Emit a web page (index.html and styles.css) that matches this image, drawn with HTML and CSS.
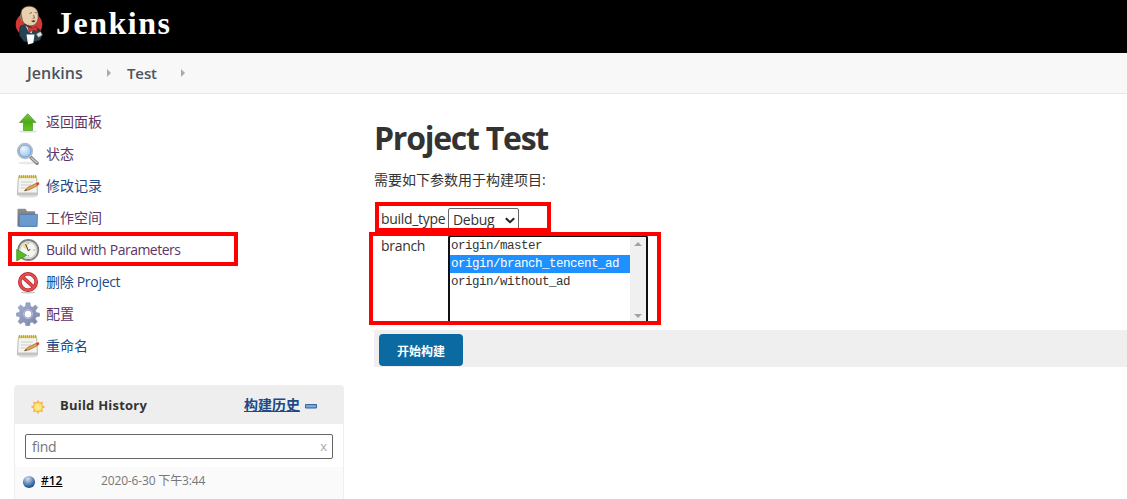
FILE: index.html
```html
<!DOCTYPE html>
<html lang="zh-CN">
<head>
<meta charset="utf-8">
<title>Test [Jenkins]</title>
<link rel="stylesheet" href="styles.css">
</head>
<body>
<svg class="defs" width="0" height="0" aria-hidden="true">
  <defs>
    <linearGradient id="green" x2="0" y2="1"><stop stop-color="#7cc63b"/><stop offset=".5" stop-color="#4fa81a"/><stop offset="1" stop-color="#62cc14"/></linearGradient>
    <linearGradient id="blue" x2="0" y2="1"><stop stop-color="#6f9dcd"/><stop offset="1" stop-color="#6699cf"/></linearGradient>
    <linearGradient id="gear" x2="1" y2="1"><stop stop-color="#a4b1d3"/><stop offset="1" stop-color="#7c81a6"/></linearGradient>
    <linearGradient id="gray" x2="0" y2="1"><stop stop-color="#8e8e8e"/><stop offset="1" stop-color="#6c6c6c"/></linearGradient>
    <radialGradient id="glass" cx=".4" cy=".35"><stop stop-color="#f0f7ff"/><stop offset="1" stop-color="#a6cbf2"/></radialGradient>
    <radialGradient id="ball" cx=".4" cy=".25" r=".75"><stop stop-color="#d5e0ec"/><stop offset=".5" stop-color="#6d94be"/><stop offset="1" stop-color="#14488c"/></radialGradient>
    <radialGradient id="sun"><stop stop-color="#fff4a5"/><stop offset="1" stop-color="#fcd95a"/></radialGradient>
    <symbol id="notepad" viewBox="0 0 24 24">
      <ellipse cx="12" cy="22.500" rx="9" ry="1" fill="#ddd"/>
      <path d="M2.300 3.500h18.400l.8 17.500h-20z" fill="#f3f3ef" stroke="#a9aaa6" stroke-width=".8"/>
      <path d="M1.800 18.500h19.500l.2 2.500H1.500z" fill="#c4c4c0"/>
      <path d="M2.300 1.500h18.400v2.700H2.300z" fill="#d9ca6c"/>
      <path d="M3.500 1v3m2-3v3m2-3v3m2-3v3m2-3v3m2-3v3m2-3v3m2-3v3m2-3v3" stroke="#a8953a" stroke-width=".7"/>
      <path d="M5 8h12M5 11h10M5 14h6" stroke="#cbcbc9" stroke-width=".9"/>
      <path d="M8.500 16.800l3.500-3.600 8.500-4 1.200 2.300-8.700 4.300z" fill="#e8a04a" stroke="#96602a" stroke-width=".7"/>
      <path d="M20 9.300l2.500-1.300 1 2.300-2.200 1.200z" fill="#e5392c"/>
      <path d="M8.500 16.800l1.500-1.600.7 1.100z" fill="#222"/>
    </symbol>
  </defs>
</svg>

<header class="header">
  <svg class="butler" width="29" height="40" viewBox="0 0 29 40">
    <ellipse cx="14" cy="19.500" rx="13.300" ry="12.500" fill="#d33833"/>
    <path d="M6 9C6 4 9 1.500 14 1.200c6 0 9 3.800 9.200 8.800.2 5-1.200 9-5.200 10.500-5 1-9-1-10.500-5z" fill="#e8cfae" stroke="#5b4a3d" stroke-width=".7"/>
    <path d="M6.300 8c-1 3 .2 6 1.700 9l-2.200-2.500c-1-2-1-4.500.5-6.500z" fill="#8d8474"/>
    <path d="M14.500 8.500l2.500-1m2.700 0l2.300.4M18.500 10l1 3-1.700.5" fill="none" stroke="#6b5540" stroke-width=".8"/>
    <path d="M16 16q2.500-1.500 4.500-.3-.5 1.700-2.300 1.600z" fill="#5a3328"/>
    <path d="M5 21.500l5-2 9 4 5 .5 3 7-2 4-7 2-9-.5-4.500-6z" fill="#274353" stroke="#142a36" stroke-width=".7"/>
    <path d="M10.500 20.500l4 3 4-1-2 6-3-2z" fill="#d9e0e4"/>
    <path d="M13 21.500l4.500 1.800 4.500-1.800v5l-4-1.200-4 2z" fill="#d33833" stroke="#751e20" stroke-width=".6"/>
    <path d="M11.500 29.500h8l-1.200 8.500-5.300 1.500z" fill="#fff"/>
    <path d="M21 29l4.500-2.500 2 3.500-4 2.500z" fill="#e5ded7" stroke="#444" stroke-width=".5"/>
  </svg>
  <span class="brand">Jenkins</span>
</header>

<nav class="crumbs">
  <a class="crumb crumb-home">Jenkins</a><i class="crumb-arrow"></i>
  <a class="crumb crumb-job">Test</a><i class="crumb-arrow"></i>
</nav>

<div class="page">
  <aside class="side">
    <ul class="tasks">
      <li class="task"><svg class="icon" viewBox="0 0 24 24"><ellipse cx="12" cy="21.500" rx="9" ry="1.300" fill="#e2e2e2"/><path d="M11.700 3.700L20 12.500h-3.500v8h-9v-8H3.500z" fill="url(#green)" stroke="#5b9c3c" stroke-width=".8"/></svg><a class="visited">返回面板</a></li>
      <li class="task"><svg class="icon" viewBox="0 0 24 24"><ellipse cx="11" cy="21" rx="9" ry="1.500" fill="#e9e9e9"/><path d="M15 15.500l6 5.700" stroke="#858585" stroke-width="3.600" stroke-linecap="round"/><path d="M15 15.500l6 5.500" stroke="#c6c6c6" stroke-width="1.600"/><circle cx="9" cy="9" r="7.400" fill="url(#glass)" stroke="#b9bcc1" stroke-width="1.500"/><circle cx="9" cy="9" r="6" fill="none" stroke="#6f9dd5" stroke-width="1"/></svg><a class="visited">状态</a></li>
      <li class="task"><svg class="icon"><use href="#notepad"/></svg><a>修改记录</a></li>
      <li class="task"><svg class="icon" viewBox="0 0 24 24"><path d="M1.500 20.500V3.500q0-.7.7-.7h7.300l1.500 2.400h7.500q.7 0 .7.700v14.600z" fill="url(#gray)"/><path d="M3.300 8.400h18.200l-.4 12H3z" fill="url(#blue)" stroke="#4878b3" stroke-width=".8"/></svg><a class="visited">工作空间</a></li>
      <li class="task"><svg class="icon" viewBox="0 0 24 24"><circle cx="12.300" cy="12" r="10" fill="#f4f4f1" stroke="#7d807c" stroke-width="1.800"/><circle cx="12.300" cy="12" r="8.200" fill="none" stroke="#cfcfca" stroke-width="1.200"/><path d="M12 12.500l-.5-7.500a7 7 0 0 0-5 3.500z" fill="#efdc84"/><path d="M12.500 13L9.500 6m3 7l1.800-2" stroke="#444" stroke-width="1"/><path d="M12.300 4.500V6m6.500 6h-1.500m-5 6.500V17" stroke="#777" stroke-width=".8"/><path d="M.7 11.500l10 5.700-10 5.700z" fill="#55bb24" stroke="#3a8a18" stroke-width=".7"/></svg><a class="visited build-label">Build with Parameters</a></li>
      <li class="task"><svg class="icon" viewBox="0 0 24 24"><ellipse cx="12" cy="22.500" rx="7" ry="1" fill="#ccc"/><circle cx="12" cy="12" r="8.200" fill="#fafafa" stroke="#b61a1e" stroke-width="3.600"/><path d="M6.500 7l11 10" stroke="#b61a1e" stroke-width="3.600"/><circle cx="12" cy="12" r="8.200" fill="none" stroke="#e05050" stroke-width="2.300"/><path d="M6.500 7l11 10" stroke="#e05050" stroke-width="2.300"/></svg><a class="delete-label">删除 Project</a></li>
      <li class="task"><svg class="icon" viewBox="0 0 24 24"><path fill-rule="evenodd" d="M10 .8h4l.5 3.700 2 .8L19.500 3l2.200 2.500-2.200 3 .8 2 3.300.7v3l-3.500.8-.8 1.800 2 3-2.500 2.200-2.800-2-1.900.8-.5 3H9.800l-.6-3-2-.8-2.900 2L2 19.500l2-2.900-.8-2L.4 14v-3l2.800-.6.8-2-2-3L4.500 3l3 2.200 2-.8zM12 8.300a3.800 3.800 0 1 0 .01 0z" fill="url(#gear)" stroke="#7f8ab0" stroke-width=".5"/><circle cx="12" cy="12.100" r="4.600" fill="none" stroke="#b4bdd8"/></svg><a class="visited">配置</a></li>
      <li class="task"><svg class="icon"><use href="#notepad"/></svg><a>重命名</a></li>
    </ul>

    <section class="history">
      <div class="history-head">
        <svg class="sun" width="16" height="16" viewBox="0 0 16 16"><path d="M8 .7l1.600 2.800L13 2.500l-.9 3.400L15.300 8l-3.200 1.700.9 3.500-3.400-1L8 15.300l-1.700-3.100-3.300 1 .9-3.500L.7 8l3.200-2.100L3 2.500l3.300 1z" fill="#f7b05a"/><circle cx="8" cy="8" r="4.600" fill="url(#sun)" stroke="#f3b050" stroke-width=".7"/></svg>
        <span class="history-title">Build History</span>
        <a class="trend">构建历史</a>
        <svg class="collapse" width="12" height="5" viewBox="0 0 12 5"><path d="M.5.5h11v3.500H.5z" fill="#7ba6d6" stroke="#3465a4"/></svg>
      </div>
      <div class="find"><span class="find-text">find</span><span class="find-clear">x</span></div>
      <div class="build">
        <svg class="ball" width="14" height="14" viewBox="0 0 14 14"><circle cx="7" cy="7" r="6.100" fill="url(#ball)"/></svg>
        <a class="build-no">#12</a><span class="build-date">2020-6-30 下午3:44</span>
      </div>
    </section>
  </aside>

  <main class="main">
    <h1 class="title">Project Test</h1>
    <p class="intro">需要如下参数用于构建项目:</p>
    <div class="params">
      <span class="name name-type">build_type</span>
      <div class="select"><span class="select-value">Debug</span><svg width="10" height="7" viewBox="0 0 10 7"><path d="M.8 1.200L5 5.200l4.200-4" fill="none" stroke="#222" stroke-width="2"/></svg></div>
      <span class="name name-branch">branch</span>
      <div class="listbox">
        <div class="options">
          <div class="option">origin/master</div>
          <div class="option selected">origin/branch_tencent_ad</div>
          <div class="option">origin/without_ad</div>
        </div>
        <div class="scroll"><i class="up"></i><i class="down"></i></div>
      </div>
    </div>
    <div class="submit-row"><button class="submit">开始构建</button></div>
  </main>
</div>

<div class="mark mark-task"></div>
<div class="mark mark-type"></div>
<div class="mark mark-branch"></div>
</body>
</html>
```

FILE: styles.css
```css
* { box-sizing: border-box; }
body {
  margin: 0;
  height: 499px;
  overflow: hidden;
  position: relative;
  background: #fff;
  color: #333;
  font: 14px/20px "Open Sans", "Noto Sans CJK SC", sans-serif;
}
.defs { position: absolute; }
.header {
  height: 53px;
  padding: 5px 0 0 15px;
  display: flex;
  align-items: flex-start;
  background: #000;
}
.brand {
  margin: 1px 0 0 12px;
  color: #fff;
  font: bold 32px/34px "Liberation Serif", serif;
  letter-spacing: 1.5px;
}
.crumbs {
  height: 41px;
  padding-left: 27px;
  display: flex;
  align-items: center;
  background: #f8f8f8;
  border-bottom: 1px solid #e8e8e8;
}
.crumb { color: #4d545d; font-size: 15px; font-weight: 600; }
.crumb-home { width: 80px; font-size: 16px; }
.crumb-job { width: 34px; margin-left: 16px; letter-spacing: -0.1px; }
.crumb-job + .crumb-arrow { margin-left: 20px; }
.crumb-arrow { border: 4px solid transparent; border-left-color: #aaa; border-right: 0; }

.page { display: flex; height: 405px; }
.side { width: 374px; flex: none; padding: 12px 0 0 14px; }
.tasks { list-style: none; margin: 0; padding: 0 0 0 2px; }
.task { height: 32px; display: flex; align-items: center; gap: 6px; color: #204a87; }
.icon { width: 24px; height: 24px; }
.visited { color: #5c3566; }
.build-label { letter-spacing: -0.52px; word-spacing: 0.5px; }
.delete-label { letter-spacing: -0.3px; }

.history { width: 330px; height: 114px; margin-top: 23px; border: 1px solid #eee; border-bottom: 0; border-radius: 4px 4px 0 0; }
.history-head { height: 38px; padding-left: 15px; display: flex; align-items: center; background: #eee; }
.sun { margin-top: 4px; }
.history-title { margin-left: 14px; width: 184px; font-size: 13px; font-weight: 700; letter-spacing: 0.22px; }
.trend { width: 56px; font-weight: 600; color: #204a87; text-decoration: underline; }
.collapse { margin: 3px 0 0 5px; }
.find {
  height: 25px;
  margin: 10px 10px 8px;
  padding: 0 5px 0 6px;
  display: flex;
  align-items: center;
  justify-content: space-between;
  border: 1px solid #666;
  border-radius: 2px;
  color: #757575;
}
.find-text { letter-spacing: -0.3px; }
.find-clear { color: #aaa; font-size: 13px; margin-top: -2px; }
.build { height: 32px; padding: 4px 0 0 7px; display: flex; align-items: flex-start; background: #fafafa; }
.ball { margin-top: 4px; }
.build-no { width: 60px; margin-left: 5px; color: #000; font-size: 12px; font-weight: 600; text-decoration: underline; }
.build-date { color: #777; font-size: 12px; letter-spacing: -0.15px; }

.main { flex: 1; }
.title { margin: 24px 0 0; font-size: 32px; line-height: 40px; font-weight: 700; letter-spacing: -1.25px; }
.intro { margin: 12px 0 0; }
.params { display: grid; grid-template-columns: 67px 200px; grid-template-rows: 27px 95px; margin: 18px 0 0 7px; }
.name { white-space: nowrap; letter-spacing: -0.3px; }
.name-type { padding-top: 1px; }
.name-branch { padding-top: 1px; }
.select {
  width: 71px;
  height: 22px;
  padding: 2px 3px 0 4px;
  display: flex;
  align-items: center;
  justify-content: space-between;
  border: 1px solid #666;
  border-radius: 2px;
}
.select-value { letter-spacing: -0.3px; }
.listbox { height: 90px; display: flex; border: 2px solid #101010; border-radius: 3px; overflow: hidden; }
.options { flex: 1; }
.option { height: 18px; padding-left: 1px; font: 12.5px/18px "Liberation Mono", monospace; letter-spacing: -0.5px; }
.selected { background: #1e90ff; color: #fff; }
.scroll { width: 16px; padding: 5px 4px; display: flex; flex-direction: column; justify-content: space-between; background: #f0f0f0; }
.up, .down { border: 4px solid transparent; }
.up { border-bottom-color: #a3a3a3; border-top: 0; }
.down { border-top-color: #a3a3a3; border-bottom: 0; }
.submit-row { height: 37px; padding: 4px 5px; background: #efefef; }
.submit {
  width: 84px;
  height: 32px;
  display: block;
  padding: 0;
  border: 0;
  border-radius: 4px;
  background: #0b6aa2;
  color: #fff;
  font: bold 12px "Noto Sans CJK SC", sans-serif;
}

.mark { position: absolute; border: 4px solid #f00; }
.mark-task { left: 8px; top: 232px; width: 230px; height: 34px; }
.mark-type { left: 375px; top: 202px; width: 176px; height: 30px; }
.mark-branch { left: 369px; top: 232px; width: 292px; height: 93px; }
```
